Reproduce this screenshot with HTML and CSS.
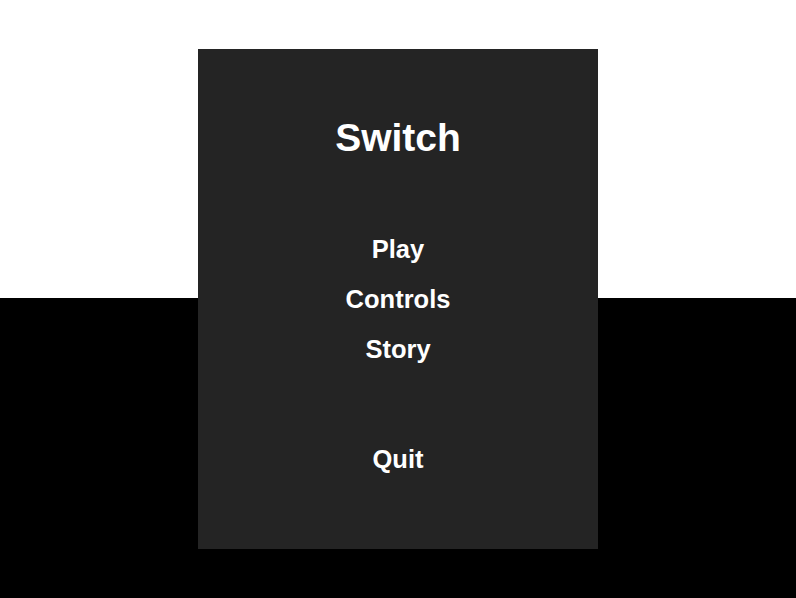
FILE: index.html
```html
<!DOCTYPE html>
<html>
<head>
<meta charset="utf-8">
<link rel="stylesheet" href="styles.css">
</head>
<body>
<div class="stage">
  <div class="menu-panel">
    <h1 class="title">Switch</h1>
    <ul class="menu">
      <li class="menu-item">Play</li>
      <li class="menu-item">Controls</li>
      <li class="menu-item">Story</li>
      <li class="menu-item menu-item-quit">Quit</li>
    </ul>
  </div>
</div>
</body>
</html>
```
FILE: styles.css
```css
html, body {
  margin: 0;
  padding: 0;
  height: 100%;
}
body {
  background: linear-gradient(to bottom, #ffffff 0, #ffffff 298px, #000000 298px, #000000 100%);
  font-family: "Liberation Sans", Arial, sans-serif;
}
.stage {
  height: 598px;
  display: flex;
  align-items: center;
  justify-content: center;
}
.menu-panel {
  width: 400px;
  height: 500px;
  box-sizing: border-box;
  background: #242424;
  padding-top: 59px;
  display: flex;
  flex-direction: column;
  align-items: center;
  color: #ffffff;
}
.title {
  margin: 0;
  font-size: 39px;
  line-height: 60px;
  font-weight: bold;
}
.menu {
  list-style: none;
  margin: 56px 0 0 0;
  padding: 0;
  display: flex;
  flex-direction: column;
  align-items: center;
}
.menu-item {
  font-size: 25.5px;
  font-weight: bold;
  line-height: 50px;
}
.menu-item-quit {
  margin-top: 60px;
}
```
